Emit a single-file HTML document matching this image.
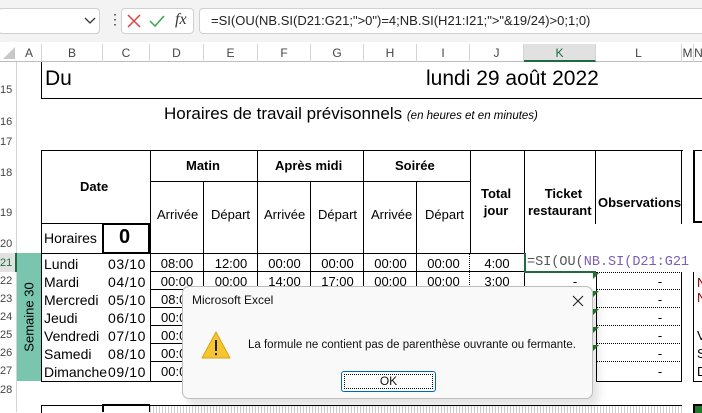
<!DOCTYPE html><html><head><style>
*{margin:0;padding:0;box-sizing:border-box}
body{width:702px;height:412px;overflow:hidden;background:#fff;font-family:"Liberation Sans",Arial,sans-serif;position:relative;color:#000}
.a{position:absolute}
.t{position:absolute;white-space:nowrap}
.bx{position:absolute;border:1px solid #000}
.rh{position:absolute;left:0;width:17px;font-size:11px;color:#444;text-align:left;padding-left:0}
.ch{position:absolute;top:44px;height:18px;font-size:12px;color:#444;text-align:center;line-height:18px;border-right:1px solid #d4d4d4}
.cell{position:absolute;font-size:13px;text-align:center;line-height:18px}
.dn{position:absolute;font-size:14px;line-height:18px;white-space:nowrap}
.dt{position:absolute;font-size:14px;line-height:18px;letter-spacing:0.6px;left:108px}
</style></head><body>
<div class="a" style="left:0;top:0;width:702px;height:42px;background:#f3f3f3"></div>
<div class="a" style="left:-2px;top:8px;width:102px;height:26px;background:#fff;border:1px solid #d0d0d0;border-radius:4px"></div>
<svg class="a" style="left:84px;top:17px" width="12" height="8"><path d="M1 1L6 6L11 1" stroke="#333" fill="none" stroke-width="1.3"/></svg>
<div class="t" style="left:108px;top:12px;font-size:14px;color:#333;line-height:14px">⋮</div>
<div class="a" style="left:121px;top:8px;width:73px;height:26px;background:#fff;border:1px solid #d0d0d0;border-radius:4px"></div>
<svg class="a" style="left:127px;top:14px" width="14" height="14"><path d="M1 1L13 13M13 1L1 13" stroke="#e04040" stroke-width="1.5"/></svg>
<svg class="a" style="left:149px;top:14px" width="16" height="14"><path d="M1 7L6 12L15 2" stroke="#3fa34d" stroke-width="1.5" fill="none"/></svg>
<div class="t" style="left:175px;top:11px;font-family:'Liberation Serif',serif;font-style:italic;font-size:16px;color:#333">fx</div>
<div class="a" style="left:199px;top:8px;width:510px;height:26px;background:#fff;border:1px solid #d0d0d0;border-radius:4px"></div>
<div class="t" style="left:211px;top:13px;font-size:13px;color:#222">=SI(OU(NB.SI(D21:G21;"&gt;0")=4;NB.SI(H21:I21;"&gt;"&amp;19/24)&gt;0;1;0)</div>
<div class="a" style="left:0;top:42px;width:702px;height:20px;background:#fff;border-bottom:1px solid #bdbdbd"></div>
<svg class="a" style="left:2px;top:46px" width="14" height="14"><path d="M13 1L13 13L1 13Z" fill="#c8c8c8"/></svg>
<div class="ch" style="left:17px;width:25px">A</div>
<div class="ch" style="left:42px;width:61px">B</div>
<div class="ch" style="left:103px;width:47px">C</div>
<div class="ch" style="left:150px;width:54px">D</div>
<div class="ch" style="left:204px;width:54px">E</div>
<div class="ch" style="left:258px;width:53px">F</div>
<div class="ch" style="left:311px;width:53px">G</div>
<div class="ch" style="left:364px;width:53px">H</div>
<div class="ch" style="left:417px;width:53px">I</div>
<div class="ch" style="left:470px;width:54px">J</div>
<div class="ch" style="left:524px;width:72px;background:#e1e1e1;color:#1e6b41;border-bottom:2px solid #1e6b41">K</div>
<div class="ch" style="left:596px;width:86px">L</div>
<div class="ch" style="left:682px;width:12px">M</div>
<div class="ch" style="left:694px;width:10px">N</div>
<div class="a" style="left:0;top:62px;width:17px;height:350px;background:#fff;border-right:1px solid #d4d4d4"></div>
<div class="rh" style="top:84px">15</div>
<div class="rh" style="top:116px">16</div>
<div class="rh" style="top:136px">17</div>
<div class="rh" style="top:167px">18</div>
<div class="rh" style="top:207px">19</div>
<div class="rh" style="top:238px">20</div>
<div class="a" style="left:0;top:253px;width:17px;height:19px;background:#e1e1e1;border-right:2px solid #1e6b41"></div>
<div class="rh" style="top:257px;color:#1e6b41">21</div>
<div class="rh" style="top:275px">22</div>
<div class="rh" style="top:293px">23</div>
<div class="rh" style="top:311px">24</div>
<div class="rh" style="top:329px">25</div>
<div class="rh" style="top:347px">26</div>
<div class="rh" style="top:365px">27</div>
<div class="rh" style="top:384px">28</div>
<div class="a" style="left:41px;top:62px;width:661px;height:37px;border-left:1px solid #000;border-bottom:1px solid #000"></div>
<div class="t" style="left:45px;top:67px;font-size:21px">Du</div>
<div class="t" style="left:426px;top:67px;font-size:21px">lundi 29 août 2022</div>
<div class="t" style="left:164px;top:104px;font-size:17px">Horaires de travail prévisonnels <i style="font-size:11.5px">(en heures et en minutes)</i></div>
<div class="bx" style="left:41px;top:150px;width:110px;height:74px"></div>
<div class="t" style="left:80px;top:179px;font-size:13px;font-weight:bold">Date</div>
<div class="bx" style="left:41px;top:223px;width:62px;height:31px"></div>
<div class="t" style="left:44px;top:230px;font-size:14px">Horaires</div>
<div class="a" style="left:102px;top:223px;width:48px;height:31px;border:2px solid #000"></div>
<div class="t" style="left:119px;top:226px;font-size:20px;font-weight:bold">0</div>
<div class="bx" style="left:150px;top:150px;width:321px;height:32px"></div>
<div class="a" style="left:257px;top:150px;width:1px;height:104px;background:#000"></div>
<div class="a" style="left:363px;top:150px;width:1px;height:104px;background:#000"></div>
<div class="t" style="left:186px;top:158px;font-size:13px;font-weight:bold">Matin</div>
<div class="t" style="left:275px;top:158px;font-size:13px;font-weight:bold">Après midi</div>
<div class="t" style="left:395px;top:158px;font-size:13px;font-weight:bold">Soirée</div>
<div class="bx" style="left:150px;top:181px;width:321px;height:73px"></div>
<div class="a" style="left:203px;top:181px;width:1px;height:73px;background:#000"></div>
<div class="a" style="left:310px;top:181px;width:1px;height:73px;background:#000"></div>
<div class="a" style="left:416px;top:181px;width:1px;height:73px;background:#000"></div>
<div class="t" style="left:157px;top:207px;font-size:13px">Arrivée</div>
<div class="t" style="left:211px;top:207px;font-size:13px">Départ</div>
<div class="t" style="left:264px;top:207px;font-size:13px">Arrivée</div>
<div class="t" style="left:318px;top:207px;font-size:13px">Départ</div>
<div class="t" style="left:371px;top:207px;font-size:13px">Arrivée</div>
<div class="t" style="left:425px;top:207px;font-size:13px">Départ</div>
<div class="bx" style="left:470px;top:150px;width:55px;height:104px"></div>
<div class="t" style="left:481px;top:185px;font-size:13px;font-weight:bold;text-align:center;line-height:17px">Total<br>jour</div>
<div class="a" style="left:524px;top:150px;width:159px;height:1px;background:#000"></div>
<div class="a" style="left:524px;top:150px;width:1px;height:104px;background:#000"></div>
<div class="a" style="left:595px;top:150px;width:1px;height:74px;background:#000"></div>
<div class="a" style="left:681px;top:150px;width:1px;height:74px;background:#000"></div>
<div class="t" style="left:528px;top:185px;font-size:13px;font-weight:bold;text-align:center;line-height:17px">&nbsp;&nbsp;Ticket<br>restaurant</div>
<div class="t" style="left:598px;top:195px;font-size:13px;font-weight:bold">Observations</div>
<div class="a" style="left:693px;top:150px;width:12px;height:73px;border-left:2px solid #000;border-bottom:2px solid #000;border-top:1px solid #000"></div>
<div class="a" style="left:17px;top:253px;width:24px;height:128px;background:#79c5ae"></div>
<div class="t" style="left:29px;top:317px;font-size:13px;transform:translate(-50%,-50%) rotate(-90deg)">Semaine 30</div>
<div class="bx" style="left:41px;top:253px;width:110px;height:129px"></div>
<div class="dn" style="left:44px;top:255px">Lundi</div>
<div class="dn" style="left:44px;top:273px">Mardi</div>
<div class="dn" style="left:44px;top:291px">Mercredi</div>
<div class="dn" style="left:44px;top:309px">Jeudi</div>
<div class="dn" style="left:44px;top:327px">Vendredi</div>
<div class="dn" style="left:44px;top:345px">Samedi</div>
<div class="dn" style="left:44px;top:363px">Dimanche</div>
<div class="dt" style="top:255px">03/10</div>
<div class="dt" style="top:273px">04/10</div>
<div class="dt" style="top:291px">05/10</div>
<div class="dt" style="top:309px">06/10</div>
<div class="dt" style="top:327px">07/10</div>
<div class="dt" style="top:345px">08/10</div>
<div class="dt" style="top:363px">09/10</div>
<div class="a" style="left:150px;top:253px;width:375px;height:129px;border:1px solid #000;border-left:none"></div>
<div class="a" style="left:150px;top:271px;width:375px;height:1px;background:#000"></div>
<div class="a" style="left:150px;top:289px;width:40px;height:1px;background:#000"></div>
<div class="a" style="left:150px;top:307px;width:40px;height:1px;background:#000"></div>
<div class="a" style="left:150px;top:325px;width:40px;height:1px;background:#000"></div>
<div class="a" style="left:150px;top:343px;width:40px;height:1px;background:#000"></div>
<div class="a" style="left:150px;top:361px;width:40px;height:1px;background:#000"></div>
<div class="a" style="left:203px;top:253px;width:1px;height:36px;background:#000"></div>
<div class="a" style="left:257px;top:253px;width:1px;height:36px;background:#000"></div>
<div class="a" style="left:310px;top:253px;width:1px;height:36px;background:#000"></div>
<div class="a" style="left:363px;top:253px;width:1px;height:36px;background:#000"></div>
<div class="a" style="left:416px;top:253px;width:1px;height:36px;background:#000"></div>
<div class="a" style="left:469px;top:253px;width:0;height:36px;border-left:1px dotted #000"></div>
<div class="cell" style="left:150px;width:54px;top:255px">08:00</div>
<div class="cell" style="left:204px;width:54px;top:255px">12:00</div>
<div class="cell" style="left:258px;width:53px;top:255px">00:00</div>
<div class="cell" style="left:311px;width:53px;top:255px">00:00</div>
<div class="cell" style="left:364px;width:53px;top:255px">00:00</div>
<div class="cell" style="left:417px;width:53px;top:255px">00:00</div>
<div class="cell" style="left:470px;width:54px;top:255px">4:00</div>
<div class="cell" style="left:150px;width:54px;top:273px">00:00</div>
<div class="cell" style="left:204px;width:54px;top:273px">00:00</div>
<div class="cell" style="left:258px;width:53px;top:273px">14:00</div>
<div class="cell" style="left:311px;width:53px;top:273px">17:00</div>
<div class="cell" style="left:364px;width:53px;top:273px">00:00</div>
<div class="cell" style="left:417px;width:53px;top:273px">00:00</div>
<div class="cell" style="left:470px;width:54px;top:273px">3:00</div>
<div class="cell" style="left:150px;width:40px;top:291px;overflow:hidden;text-align:left;padding-left:11px">08:00</div>
<div class="cell" style="left:150px;width:40px;top:309px;overflow:hidden;text-align:left;padding-left:11px">00:00</div>
<div class="cell" style="left:150px;width:40px;top:327px;overflow:hidden;text-align:left;padding-left:11px">00:00</div>
<div class="cell" style="left:150px;width:40px;top:345px;overflow:hidden;text-align:left;padding-left:11px">00:00</div>
<div class="cell" style="left:150px;width:40px;top:363px;overflow:hidden;text-align:left;padding-left:11px">00:00</div>
<div class="a" style="left:524px;top:253px;width:72px;height:20px;background:#fff;border-left:2px solid #1e6b41;border-bottom:2px solid #1e6b41"></div>
<div class="t" style="left:527px;top:255px;font-family:'Liberation Mono',monospace;font-size:13.5px;color:#555">=SI(OU(<span style="color:#7a5fb8">NB.SI(D21:G21</span></div>
<div class="a" style="left:596px;top:272px;width:86px;height:110px;border:1px solid #000;border-top:none"></div>
<div class="a" style="left:596px;top:272px;width:86px;border-top:1px dotted #000"></div>
<div class="a" style="left:596px;top:289px;width:86px;border-top:1px dotted #000"></div>
<div class="a" style="left:596px;top:307px;width:86px;border-top:1px dotted #000"></div>
<div class="a" style="left:596px;top:325px;width:86px;border-top:1px dotted #000"></div>
<div class="a" style="left:596px;top:343px;width:86px;border-top:1px dotted #000"></div>
<div class="a" style="left:596px;top:361px;width:86px;border-top:1px dotted #000"></div>
<div class="cell" style="left:640px;width:40px;top:273px">-</div>
<div class="cell" style="left:640px;width:40px;top:291px">-</div>
<div class="cell" style="left:640px;width:40px;top:309px">-</div>
<div class="cell" style="left:640px;width:40px;top:327px">-</div>
<div class="cell" style="left:640px;width:40px;top:345px">-</div>
<div class="cell" style="left:640px;width:40px;top:363px">-</div>
<div class="cell" style="left:560px;width:30px;top:273px">-</div>
<svg class="a" style="left:593px;top:272px" width="8" height="110"><path d="M0 1h6l-6 6zM0 19h6l-6 6zM0 37h6l-6 6zM0 55h6l-6 6zM0 73h6l-6 6z" fill="#1e7a2a"/></svg>
<div class="a" style="left:693px;top:272px;width:12px;height:110px;border-left:1px solid #000;border-bottom:1px solid #000"></div>
<div class="t" style="left:697px;top:275px;font-size:13px;color:#800">N<br>N</div>
<div class="t" style="left:697px;top:327px;font-size:13px;line-height:18px">V<br>S<br>D</div>
<div class="a" style="left:41px;top:405px;width:110px;height:8px;border-top:1px solid #000;border-left:1px solid #000"></div>
<div class="a" style="left:102px;top:404px;width:48px;height:8px;border-top:2px solid #000;border-left:2px solid #000;border-right:1px solid #000"></div>
<div class="a" style="left:150px;top:405px;width:532px;height:8px;border-top:1px solid #000;background:repeating-linear-gradient(90deg,#ccc 0 1px,#fff 1px 3px)"></div>
<div class="a" style="left:693px;top:404px;width:10px;height:9px;border-top:2px solid #000;border-left:2px solid #000;background:#1e7a2a"></div>
<div class="a" style="left:187px;top:292px;width:412px;height:114px;background:rgba(0,0,0,.1);border-radius:8px;filter:blur(4px)"></div>
<div class="a" style="left:182px;top:286px;width:411px;height:113px;background:#f9f9f9;border:1px solid #bdbdbd;border-radius:7px"></div>
<div class="t" style="left:192px;top:293px;font-size:12px;color:#111">Microsoft Excel</div>
<svg class="a" style="left:572px;top:295px" width="12" height="12"><path d="M1 1L11 11M11 1L1 11" stroke="#222" stroke-width="1.1"/></svg>
<svg class="a" style="left:201px;top:330px" width="30" height="30"><path d="M15 2L29 28H1Z" fill="#f7c531" stroke="#d9a40f" stroke-width="1" stroke-linejoin="round"/><rect x="14" y="10" width="2" height="11" fill="#222"/><rect x="14" y="23" width="2" height="2.2" fill="#222"/></svg>
<div class="t" style="left:248px;top:339px;font-size:11.5px;color:#111">La formule ne contient pas de parenthèse ouvrante ou fermante.</div>
<div class="a" style="left:341px;top:371px;width:95px;height:21px;background:#fdfdfd;border:1px solid #0067c0;border-radius:3px;text-align:center;font-size:12px;line-height:19px;color:#111"><div style="position:absolute;left:2px;top:2px;right:2px;bottom:2px;border:1px dotted #000"></div>OK</div>
</body></html>
